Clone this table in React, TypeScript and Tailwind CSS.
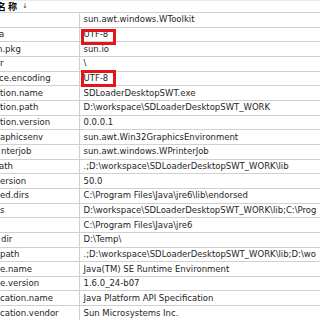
const rows: { key: string; value: string; shift?: number; mark?: "a" | "b" }[] = [
  { key: "", value: "sun.awt.windows.WToolkit" },
  { key: "a", value: "UTF-8", shift: -1, mark: "a" },
  { key: "n.pkg", value: "sun.io", shift: -3 },
  { key: "r", value: "\\", shift: 0 },
  { key: "ce.encoding", value: "UTF-8", shift: -1, mark: "b" },
  { key: "tion.name", value: "SDLoaderDesktopSWT.exe" },
  { key: "tion.path", value: "D:\\workspace\\SDLoaderDesktopSWT_WORK" },
  { key: "tion.version", value: "0.0.0.1" },
  { key: "aphicsenv", value: "sun.awt.Win32GraphicsEnvironment" },
  { key: "nterjob", value: "sun.awt.windows.WPrinterJob", shift: 1 },
  { key: "ath", value: ".;D:\\workspace\\SDLoaderDesktopSWT_WORK\\lib", shift: -1 },
  { key: "ersion", value: "50.0" },
  { key: "ed.dirs", value: "C:\\Program Files\\Java\\jre6\\lib\\endorsed" },
  { key: "s", value: "D:\\workspace\\SDLoaderDesktopSWT_WORK\\lib;C:\\Prog" },
  { key: "", value: "C:\\Program Files\\Java\\jre6" },
  { key: "dir", value: "D:\\Temp\\", shift: 1 },
  { key: "path", value: ".;D:\\workspace\\SDLoaderDesktopSWT_WORK\\lib;D:\\wo" },
  { key: "e.name", value: "Java(TM) SE Runtime Environment" },
  { key: "e.version", value: "1.6.0_24-b07" },
  { key: "cation.name", value: "Java Platform API Specification" },
  { key: "cation.vendor", value: "Sun Microsystems Inc." },
];

const App = () => {
  return (
    <div className="w-[320px] h-[320px] overflow-hidden bg-white text-[#1e1e1e] font-['DejaVu_Sans',sans-serif] text-[8.5px]">
      {/* header */}
      <div className="h-[13px] border-t border-b border-[#d0d0d0] border-t-[#ebebeb] flex items-center">
        <span className="ml-[-3px] font-bold text-[9px] text-black font-['Noto_Sans_CJK_SC',sans-serif]">名 称</span>
        <span className="ml-[5px] text-[7px] text-[#444] leading-none">↓</span>
      </div>
      {rows.map((r, i) => (
        <div key={i} className="h-[14.67px] flex border-b border-[#d0d0d0]">
          <div className="w-[80px] shrink-0 flex items-center overflow-hidden border-r border-[#d0d0d0] whitespace-nowrap">
            <span style={{ marginLeft: r.shift ?? 0 }}>{r.key}</span>
          </div>
          <div className="relative flex-1 flex items-center pl-[3.5px] whitespace-nowrap">
            {r.value}
            {r.mark === "a" && (
              <div className="absolute left-[1px] top-[1px] w-[35px] h-[16px] border-[3px] border-[#e4141b]" />
            )}
            {r.mark === "b" && (
              <div className="absolute left-[1px] top-[-2px] w-[35px] h-[17px] border-[3px] border-[#e4141b]" />
            )}
          </div>
        </div>
      ))}
    </div>
  );
};

export default App;
